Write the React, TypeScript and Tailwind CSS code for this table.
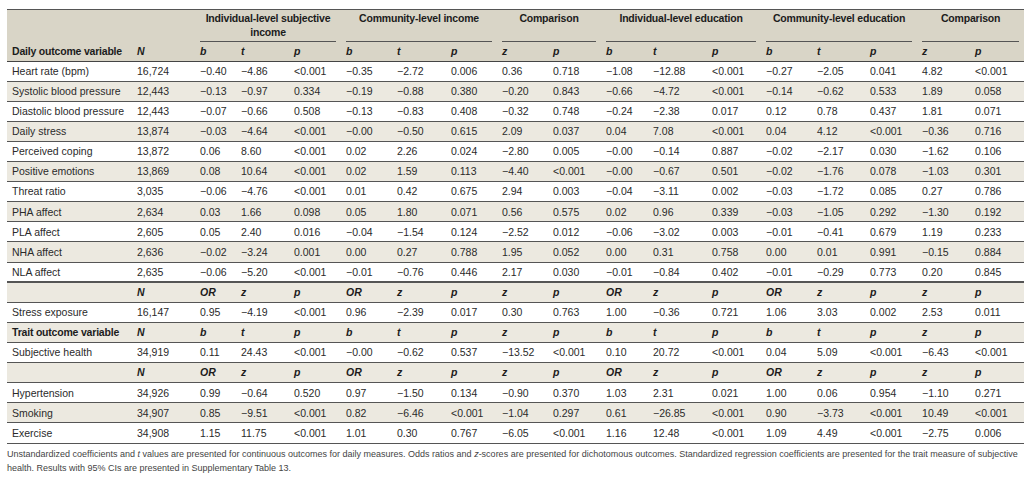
import React from "react";

type Row = { label: string; cells: string[]; bg: boolean; kind: "data" | "sub"; thick?: boolean };

const colCls = [
  "w-[125px]", "w-[63px]", "w-[41px]", "w-[53px]", "w-[52px]", "w-[51px]", "w-[54px]", "w-[51px]", "w-[51px]",
  "w-[53px]", "w-[47px]", "w-[59px]", "w-[54px]", "w-[51px]", "w-[53px]", "w-[52px]", "w-[53px]", "w-[54px]",
];

const orHead = ["N", "OR", "z", "p", "OR", "z", "p", "z", "p", "OR", "z", "p", "OR", "z", "p", "z", "p"];
const btHead = ["N", "b", "t", "p", "b", "t", "p", "z", "p", "b", "t", "p", "b", "t", "p", "z", "p"];

const d = (s: string) => s.split(" ");

const rows: Row[] = [
  { label: "Heart rate (bpm)", cells: d("16,724 −0.40 −4.86 <0.001 −0.35 −2.72 0.006 0.36 0.718 −1.08 −12.88 <0.001 −0.27 −2.05 0.041 4.82 <0.001"), bg: false, kind: "data" },
  { label: "Systolic blood pressure", cells: d("12,443 −0.13 −0.97 0.334 −0.19 −0.88 0.380 −0.20 0.843 −0.66 −4.72 <0.001 −0.14 −0.62 0.533 1.89 0.058"), bg: true, kind: "data" },
  { label: "Diastolic blood pressure", cells: d("12,443 −0.07 −0.66 0.508 −0.13 −0.83 0.408 −0.32 0.748 −0.24 −2.38 0.017 0.12 0.78 0.437 1.81 0.071"), bg: false, kind: "data" },
  { label: "Daily stress", cells: d("13,874 −0.03 −4.64 <0.001 −0.00 −0.50 0.615 2.09 0.037 0.04 7.08 <0.001 0.04 4.12 <0.001 −0.36 0.716"), bg: true, kind: "data" },
  { label: "Perceived coping", cells: d("13,872 0.06 8.60 <0.001 0.02 2.26 0.024 −2.80 0.005 −0.00 −0.14 0.887 −0.02 −2.17 0.030 −1.62 0.106"), bg: false, kind: "data" },
  { label: "Positive emotions", cells: d("13,869 0.08 10.64 <0.001 0.02 1.59 0.113 −4.40 <0.001 −0.00 −0.67 0.501 −0.02 −1.76 0.078 −1.03 0.301"), bg: true, kind: "data" },
  { label: "Threat ratio", cells: d("3,035 −0.06 −4.76 <0.001 0.01 0.42 0.675 2.94 0.003 −0.04 −3.11 0.002 −0.03 −1.72 0.085 0.27 0.786"), bg: false, kind: "data" },
  { label: "PHA affect", cells: d("2,634 0.03 1.66 0.098 0.05 1.80 0.071 0.56 0.575 0.02 0.96 0.339 −0.03 −1.05 0.292 −1.30 0.192"), bg: true, kind: "data" },
  { label: "PLA affect", cells: d("2,605 0.05 2.40 0.016 −0.04 −1.54 0.124 −2.52 0.012 −0.06 −3.02 0.003 −0.01 −0.41 0.679 1.19 0.233"), bg: false, kind: "data" },
  { label: "NHA affect", cells: d("2,636 −0.02 −3.24 0.001 0.00 0.27 0.788 1.95 0.052 0.00 0.31 0.758 0.00 0.01 0.991 −0.15 0.884"), bg: true, kind: "data" },
  { label: "NLA affect", cells: d("2,635 −0.06 −5.20 <0.001 −0.01 −0.76 0.446 2.17 0.030 −0.01 −0.84 0.402 −0.01 −0.29 0.773 0.20 0.845"), bg: false, kind: "data", thick: true },
  { label: "", cells: orHead, bg: true, kind: "sub" },
  { label: "Stress exposure", cells: d("16,147 0.95 −4.19 <0.001 0.96 −2.39 0.017 0.30 0.763 1.00 −0.36 0.721 1.06 3.03 0.002 2.53 0.011"), bg: false, kind: "data" },
  { label: "Trait outcome variable", cells: btHead, bg: true, kind: "sub" },
  { label: "Subjective health", cells: d("34,919 0.11 24.43 <0.001 −0.00 −0.62 0.537 −13.52 <0.001 0.10 20.72 <0.001 0.04 5.09 <0.001 −6.43 <0.001"), bg: false, kind: "data" },
  { label: "", cells: orHead, bg: true, kind: "sub" },
  { label: "Hypertension", cells: d("34,926 0.99 −0.64 0.520 0.97 −1.50 0.134 −0.90 0.370 1.03 2.31 0.021 1.00 0.06 0.954 −1.10 0.271"), bg: false, kind: "data" },
  { label: "Smoking", cells: d("34,907 0.85 −9.51 <0.001 0.82 −6.46 <0.001 −1.04 0.297 0.61 −26.85 <0.001 0.90 −3.73 <0.001 10.49 <0.001"), bg: true, kind: "data" },
  { label: "Exercise", cells: d("34,908 1.15 11.75 <0.001 1.01 0.30 0.767 −6.05 <0.001 1.16 12.48 <0.001 1.09 4.49 <0.001 −2.75 0.006"), bg: false, kind: "data" },
];

const groups = [
  { span: 3, title: ["Individual-level subjective", "income"] },
  { span: 3, title: ["Community-level income"] },
  { span: 2, title: ["Comparison"] },
  { span: 3, title: ["Individual-level education"] },
  { span: 3, title: ["Community-level education"] },
  { span: 2, title: ["Comparison"] },
];

export default function App() {
  return (
    <div
      className="w-[1035px] h-[481px] bg-white pt-[9px] px-[7px] text-[#2a2a2a]"
      style={{ fontFamily: '"Liberation Sans", Arial, sans-serif' }}
    >
      <table className="table-fixed border-collapse w-[1017px] text-[10.5px] leading-none border-t border-[#555]">
        <colgroup>
          {colCls.map((c, i) => (
            <col key={i} className={c} />
          ))}
        </colgroup>
        <thead>
          <tr className="bg-[#d9d5c7]">
            <th colSpan={2} className="p-0 h-[32px]" />
            {groups.map((g, i) => (
              <th key={i} colSpan={g.span} className="p-0 px-[5px] align-top h-[32px]">
                <div className="h-[32px] border-b border-[#555] pt-[1px] text-center font-bold text-[#1c1c1c] leading-[14px] tracking-[-0.2px] whitespace-nowrap">
                  {g.title.map((t, j) => (
                    <div key={j}>{t}</div>
                  ))}
                </div>
              </th>
            ))}
          </tr>
          <tr className="bg-[#d9d5c7] border-b-[1.5px] border-[#444]">
            <th className="h-[19px] p-0 px-[5px] text-left font-bold text-[#1c1c1c] tracking-[-0.2px] whitespace-nowrap">
              Daily outcome variable
            </th>
            {btHead.map((h, i) => (
              <th key={i} className="h-[19px] p-0 px-[5px] text-left font-bold italic text-[#1c1c1c]">
                {h}
              </th>
            ))}
          </tr>
        </thead>
        <tbody>
          {rows.map((r, i) => (
            <tr
              key={i}
              className={`${r.bg ? "bg-[#ece9e0]" : "bg-white"} ${
                r.thick ? "border-b-2" : "border-b"
              } border-[#555]`}
            >
              <td
                className={`h-[20.12px] p-0 px-[5px] whitespace-nowrap ${
                  r.kind === "sub" ? "font-bold text-[#1c1c1c] tracking-[-0.2px]" : ""
                }`}
              >
                {r.label}
              </td>
              {r.cells.map((c, j) => (
                <td
                  key={j}
                  className={`h-[20.12px] p-0 px-[5px] whitespace-nowrap ${
                    r.kind === "sub" ? "font-bold italic text-[#1c1c1c]" : ""
                  }`}
                >
                  {c}
                </td>
              ))}
            </tr>
          ))}
        </tbody>
      </table>
      <div className="mt-[3px] text-[9px] leading-[14px] text-[#444] whitespace-nowrap">
        <div>
          Unstandardized coefficients and <i>t</i> values are presented for continuous outcomes for daily measures. Odds
          ratios and <i>z</i>-scores are presented for dichotomous outcomes. Standardized regression coefficients are
          presented for the trait measure of subjective
        </div>
        <div>health. Results with 95% CIs are presented in Supplementary Table 13.</div>
      </div>
    </div>
  );
}
